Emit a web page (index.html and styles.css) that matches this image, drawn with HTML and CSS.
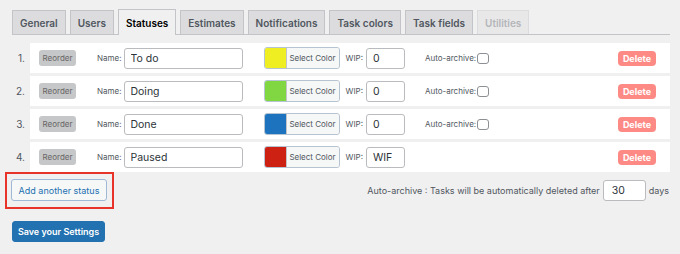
FILE: index.html
```html
<!DOCTYPE html>
<html>
<head>
  <title>Kanban Settings</title>
  <link rel="stylesheet" href="styles.css">
</head>
<body>
  <div class="wrap">
    <nav class="tabs">
      <a class="tab">General</a>
      <a class="tab">Users</a>
      <a class="tab active">Statuses</a>
      <a class="tab">Estimates</a>
      <a class="tab">Notifications</a>
      <a class="tab">Task colors</a>
      <a class="tab">Task fields</a>
      <a class="tab disabled">Utilities</a>
    </nav>

    <div class="statuses">
      <div class="status-row">
        <span class="num">1.</span>
        <div class="status">
          <button class="reorder">Reorder</button>
          <label class="field-label name-label">Name:</label>
          <input class="name-input" type="text" value="To do">
          <button class="color-btn"><span class="swatch swatch-yellow"></span><span class="color-text">Select Color</span></button>
          <label class="field-label wip-label">WIP:</label>
          <input class="wip-input" type="text" value="0">
          <label class="field-label archive-label">Auto-archive:</label>
          <input class="archive-check" type="checkbox">
          <button class="delete">Delete</button>
        </div>
      </div>

      <div class="status-row">
        <span class="num">2.</span>
        <div class="status">
          <button class="reorder">Reorder</button>
          <label class="field-label name-label">Name:</label>
          <input class="name-input" type="text" value="Doing">
          <button class="color-btn"><span class="swatch swatch-green"></span><span class="color-text">Select Color</span></button>
          <label class="field-label wip-label">WIP:</label>
          <input class="wip-input" type="text" value="0">
          <label class="field-label archive-label">Auto-archive:</label>
          <input class="archive-check" type="checkbox">
          <button class="delete">Delete</button>
        </div>
      </div>

      <div class="status-row">
        <span class="num">3.</span>
        <div class="status">
          <button class="reorder">Reorder</button>
          <label class="field-label name-label">Name:</label>
          <input class="name-input" type="text" value="Done">
          <button class="color-btn"><span class="swatch swatch-blue"></span><span class="color-text">Select Color</span></button>
          <label class="field-label wip-label">WIP:</label>
          <input class="wip-input" type="text" value="0">
          <label class="field-label archive-label">Auto-archive:</label>
          <input class="archive-check" type="checkbox">
          <button class="delete">Delete</button>
        </div>
      </div>

      <div class="status-row">
        <span class="num">4.</span>
        <div class="status">
          <button class="reorder">Reorder</button>
          <label class="field-label name-label">Name:</label>
          <input class="name-input" type="text" value="Paused">
          <button class="color-btn"><span class="swatch swatch-red"></span><span class="color-text">Select Color</span></button>
          <label class="field-label wip-label">WIP:</label>
          <input class="wip-input" type="text" value="WIF">
          <button class="delete">Delete</button>
        </div>
      </div>
    </div>

    <div class="footer-row">
      <span class="highlight">
        <button class="add-status">Add another status</button>
      </span>
      <div class="archive-note">
        Auto-archive : Tasks will be automatically deleted after
        <input class="days-input" type="text" value="30">
        days
      </div>
    </div>

    <button class="save">Save your Settings</button>
  </div>
</body>
</html>
```

FILE: styles.css
```css
body {
  margin: 0;
  background: #f0f0f1;
  font-family: 'Inter', 'Liberation Sans', sans-serif;
  color: #3c434a;
}
.wrap {
  padding: 10px 10px 0 12px;
}
button, input {
  font-family: inherit;
}

/* tabs */
.tabs {
  display: flex;
  align-items: flex-end;
  gap: 4px;
  border-bottom: 1px solid #c3c4c7;
  height: 24px;
}
.tab {
  box-sizing: border-box;
  height: 24px;
  padding: 0 7px;
  display: flex;
  align-items: center;
  background: #dcdcde;
  border: 1px solid #c3c4c7;
  border-bottom: none;
  color: #50575e;
  font-size: 10px;
  font-weight: 600;
}
.tab.active {
  height: 26px;
  margin-bottom: -1px;
  background: #f0f0f1;
  color: #000;
}
.tab.disabled {
  background: #e8e8e9;
  border-color: #dcdcde;
  color: #b4b6b9;
}

/* status rows */
.statuses {
  margin-top: 8px;
  display: flex;
  flex-direction: column;
  gap: 3px;
}
.status-row {
  display: flex;
  height: 30px;
}
.num {
  width: 18px;
  padding-right: 5px;
  box-sizing: border-box;
  text-align: right;
  align-self: center;
  font-size: 10px;
  color: #50575e;
}
.status {
  flex: 1;
  display: flex;
  align-items: center;
  background: #fff;
  padding: 0 14px 0 9px;
}
.reorder {
  width: 37px;
  height: 16px;
  padding: 0;
  border: none;
  border-radius: 3px;
  background: #c6c7c8;
  color: #666;
  font-size: 8px;
}
.field-label {
  font-size: 8px;
  color: #50575e;
}
.name-label {
  margin: 0 2px 0 21px;
}
.name-input, .wip-input, .days-input {
  box-sizing: border-box;
  height: 21px;
  margin: 0;
  padding: 0 6px;
  border: 1px solid #b9bbbe;
  border-radius: 3px;
  background: #fff;
  color: #2c3338;
  font-size: 10.5px;
}
.name-input {
  width: 119px;
}
.color-btn {
  display: flex;
  box-sizing: border-box;
  width: 76px;
  height: 22px;
  margin-left: 21px;
  padding: 0;
  border: 1px solid #b6c3d1;
  border-radius: 3px;
  overflow: hidden;
}
.swatch {
  width: 21px;
  height: 100%;
}
.swatch-yellow { background: #eeee22; }
.swatch-green { background: #81d742; }
.swatch-blue { background: #1e73be; }
.swatch-red { background: #cd2113; }
.color-text {
  flex: 1;
  display: flex;
  align-items: center;
  justify-content: center;
  background: #f6f7f7;
  border-left: 1px solid #c3c4c7;
  color: #50575e;
  font-size: 8px;
}
.wip-label {
  margin: 0 3px 0 6px;
}
.wip-input {
  width: 39px;
}
.archive-label {
  margin: 0 1px 0 20px;
}
.archive-check {
  appearance: none;
  box-sizing: border-box;
  width: 12px;
  height: 11px;
  margin: 0;
  border: 1px solid #8c8f94;
  border-radius: 3px;
  background: #fff;
}
.delete {
  margin-left: auto;
  width: 38px;
  height: 15px;
  padding: 0;
  border: none;
  border-radius: 4px;
  background: #fd8a84;
  color: #fff;
  font-size: 9px;
  font-weight: 700;
}

/* footer */
.footer-row {
  display: flex;
  justify-content: space-between;
  align-items: center;
}
.highlight {
  display: flex;
  margin-left: -7px;
  padding: 5px 5px 6px 4px;
  border: 2px solid #e8332b;
}
.add-status {
  height: 22px;
  width: 96px;
  padding: 0;
  border: 1px solid #9fb9d7;
  border-radius: 3px;
  background: #f6f7f7;
  color: #2271b1;
  font-size: 9px;
}
.archive-note {
  display: flex;
  align-items: center;
  gap: 3px;
  font-size: 9px;
  color: #50575e;
  margin-right: 1px;
}
.days-input {
  width: 43px;
  padding-left: 8px;
}
.save {
  margin-top: 12px;
  height: 21px;
  width: 93px;
  padding: 0;
  border: 1px solid #2271b1;
  border-radius: 3px;
  background: #2271b1;
  color: #fff;
  font-size: 9px;
  font-weight: 600;
}
```
